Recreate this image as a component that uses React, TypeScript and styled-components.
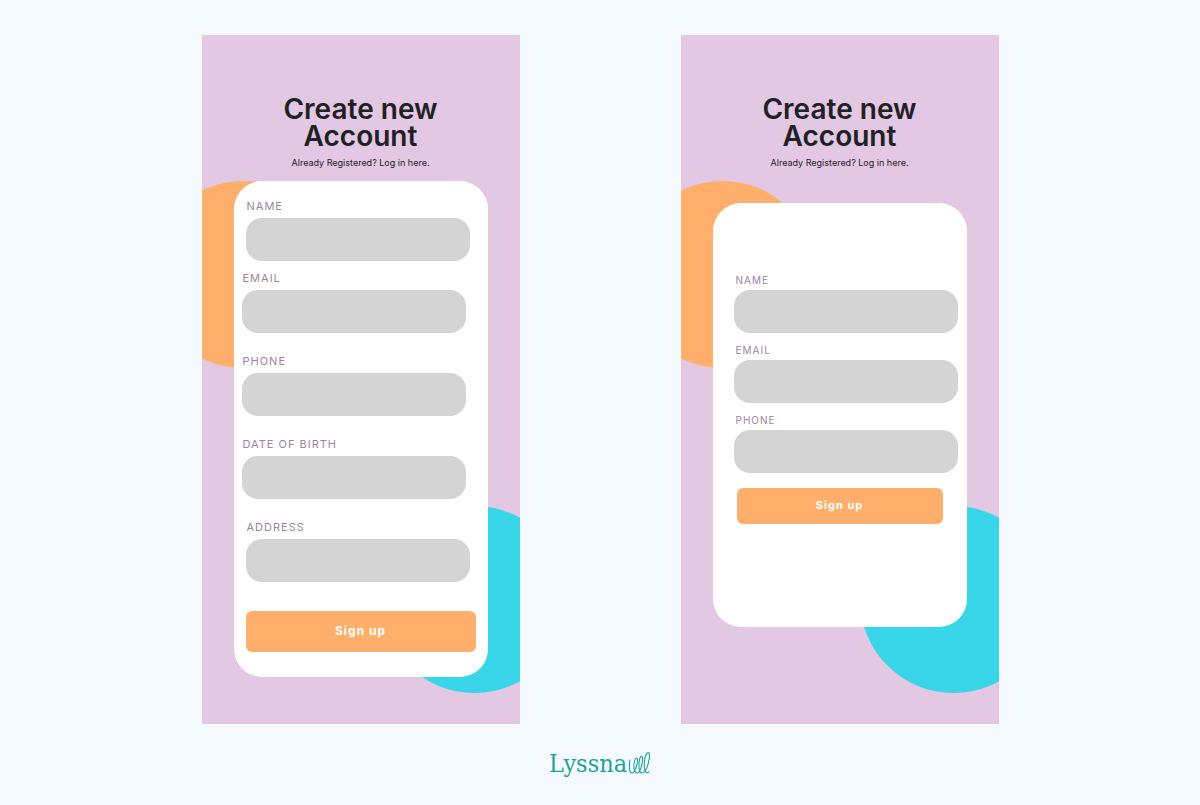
import { useId } from "react";
import styled, { createGlobalStyle } from "styled-components";

const GlobalStyle = createGlobalStyle`
  *, *::before, *::after { box-sizing: border-box; }
  body {
    margin: 0;
    background: #f4faff;
    font-family: Inter, "Liberation Sans", sans-serif;
  }
`;

const Page = styled.main`
  display: flex;
  flex-direction: column;
  align-items: center;
  padding: 35px 24px 24px;
`;

const Screens = styled.div`
  display: flex;
  flex-wrap: wrap;
  justify-content: center;
  gap: 35px 161px;
  width: 100%;
`;

const Screen = styled.section`
  position: relative;
  overflow: hidden;
  width: 100%;
  max-width: 318px;
  min-height: 689px;
  padding: 61px 32px 47px;
  background: #e2c8e3;
`;

const Circle = styled.div<{ $tone: "orange" | "cyan" }>`
  position: absolute;
  width: 187px;
  height: 187px;
  border-radius: 50%;
  ${({ $tone }) =>
    $tone === "orange"
      ? "top: 146px; left: -52px; background: #ffaf6b;"
      : "bottom: 31px; right: -48px; background: #38d6e8;"}
`;

const Heading = styled.header`
  position: relative;
  text-align: center;
  color: #1f2124;
`;

const Title = styled.h1`
  margin: 0;
  font-size: 28px;
  line-height: 27px;
  font-weight: 600;
`;

const Subtitle = styled.p`
  margin: 6px 0 0;
  font-size: 9px;
  line-height: 14px;
`;

const LoginLink = styled.a`
  color: inherit;
  text-decoration: none;
`;

const Card = styled.form<{ $compact?: boolean }>`
  position: relative;
  display: flex;
  flex-direction: column;
  margin-top: ${({ $compact }) => ($compact ? 33 : 11)}px;
  padding: ${({ $compact }) => ($compact ? "70px 9px 103px 21px" : "17px 12px 25px 8px")};
  border-radius: 28px;
  background: #fff;
`;

const Group = styled.div<{ $gap: number; $inset?: boolean }>`
  display: flex;
  flex-direction: column;
  gap: ${({ $gap }) => $gap}px;
  padding-left: ${({ $inset }) => ($inset ? 4 : 0)}px;
`;

const Stack = styled.div<{ $gap: number }>`
  display: flex;
  flex-direction: column;
  gap: ${({ $gap }) => $gap}px;
`;

const Label = styled.label<{ $compact?: boolean }>`
  padding-left: ${({ $compact }) => ($compact ? 2 : 1)}px;
  color: #9a86a0;
  font-size: ${({ $compact }) => ($compact ? 10 : 11)}px;
  line-height: ${({ $compact }) => ($compact ? 14 : 16)}px;
  letter-spacing: 1px;
  text-transform: uppercase;
`;

const Input = styled.input`
  width: 100%;
  max-width: 224px;
  height: 43px;
  padding: 0 16px;
  border: 0;
  border-radius: 16px;
  background: #d4d4d4;
  font: inherit;
  font-size: 14px;
`;

const SubmitButton = styled.button<{ $compact?: boolean }>`
  height: ${({ $compact }) => ($compact ? 36 : 41)}px;
  margin: ${({ $compact }) => ($compact ? "15px 15px 0 3px" : "29px 0 0 4px")};
  padding: 0 0 2px;
  border: 0;
  border-radius: 6px;
  background: #ffaf6b;
  color: #fff;
  font-family: inherit;
  font-size: ${({ $compact }) => ($compact ? 11 : 12)}px;
  font-weight: 700;
  letter-spacing: 1px;
`;

const Brand = styled.footer`
  display: flex;
  align-items: center;
  margin-top: 24px;
  color: #1fa39b;
`;

const Wordmark = styled.span`
  font-family: "DejaVu Serif Condensed", "DejaVu Serif", serif;
  font-size: 25px;
  line-height: 32px;
`;

type FieldProps = { label: string; type: string; compact?: boolean; inset?: boolean };

function Field({ label, type, compact, inset }: FieldProps) {
  const id = useId();
  return (
    <Group $gap={compact ? 3 : 4} $inset={inset}>
      <Label htmlFor={id} $compact={compact}>{label}</Label>
      <Input id={id} type={type} />
    </Group>
  );
}

function Intro() {
  return (
    <Heading>
      <Title>Create new<br />Account</Title>
      <Subtitle>
        Already Registered? <LoginLink href="#login">Log in here.</LoginLink>
      </Subtitle>
    </Heading>
  );
}

export default function App() {
  return (
    <>
      <GlobalStyle />
      <Page>
        <Screens>
          <Screen>
            <Circle $tone="orange" />
            <Circle $tone="cyan" />
            <Intro />
            <Card>
              <Stack $gap={9}>
                <Field label="Name" type="text" inset />
                <Stack $gap={20}>
                  <Field label="Email" type="email" />
                  <Field label="Phone" type="tel" />
                  <Field label="Date of birth" type="text" />
                  <Field label="Address" type="text" inset />
                </Stack>
              </Stack>
              <SubmitButton type="button">Sign up</SubmitButton>
            </Card>
          </Screen>
          <Screen>
            <Circle $tone="orange" />
            <Circle $tone="cyan" />
            <Intro />
            <Card $compact>
              <Stack $gap={10}>
                <Field label="Name" type="text" compact />
                <Field label="Email" type="email" compact />
                <Field label="Phone" type="tel" compact />
              </Stack>
              <SubmitButton type="button" $compact>Sign up</SubmitButton>
            </Card>
          </Screen>
        </Screens>
        <Brand>
          <Wordmark>Lyssna</Wordmark>
          <svg width="24" height="26" viewBox="0 0 24 26" fill="none" stroke="currentColor" strokeWidth="1.1" strokeLinecap="round" aria-hidden="true">
            <path d="M3 9C2 14 2 22 5 22C8 22 10.500 13 10.500 9C10.500 5.500 7.500 7 7 13C6.600 18 7.500 22 10 22C13.500 22 15.500 12 15.500 7C15.500 3.500 12.500 5 12 12C11.600 18 12.500 22 15 22C19 22 22.500 11 22.500 4C22.500 -1 18 2 17.300 11C16.800 18 18 24 22 21" />
          </svg>
        </Brand>
      </Page>
    </>
  );
}
